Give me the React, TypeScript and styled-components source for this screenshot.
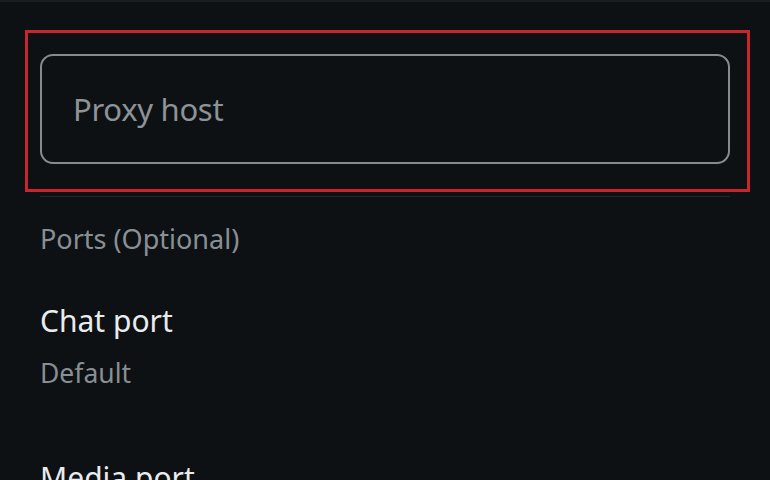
import * as React from "react";
import styled, { createGlobalStyle } from "styled-components";

const GlobalStyle = createGlobalStyle`
  html, body {
    margin: 0;
    padding: 0;
    background: #0d1114;
  }
  body {
    font-family: "Noto Sans", "DejaVu Sans", sans-serif;
    -webkit-font-smoothing: antialiased;
  }
`;

const Screen = styled.div`
  width: 770px;
  height: 480px;
  overflow: hidden;
  background: #0d1114;
  border-top: 2px solid #1a1e22;
  box-sizing: border-box;
`;

const Highlight = styled.div`
  margin: 28px 20px 0 25px;
  border: 3px solid #c9252e;
  padding: 21px 17px 25px 12px;
`;

const Field = styled.div`
  height: 110px;
  border: 2px solid #868b8f;
  border-radius: 13px;
  box-sizing: border-box;
  display: flex;
  align-items: center;
  padding: 0 31px;
`;

const Placeholder = styled.span`
  font-size: 31px;
  color: #8e9397;
  letter-spacing: -0.3px;
`;

const Divider = styled.div`
  height: 1px;
  margin: 4px 40px 0 40px;
  background: #23282c;
`;

const Body = styled.div`
  padding: 0 40px;
`;

const SectionTitle = styled.div`
  margin-top: 26px;
  font-size: 27px;
  line-height: 32px;
  color: #899095;
`;

const Item = styled.div<{ $gap?: number }>`
  margin-top: ${(p) => p.$gap ?? 0}px;
`;

const ItemTitle = styled.div`
  font-size: 30px;
  line-height: 40px;
  color: #e9ebed;
`;

const ItemValue = styled.div`
  font-size: 26.5px;
  line-height: 32px;
  margin-top: 16px;
  color: #898e92;
`;

export default function App() {
  return (
    <>
      <GlobalStyle />
      <Screen>
        <Highlight>
          <Field>
            <Placeholder>Proxy host</Placeholder>
          </Field>
        </Highlight>
        <Divider />
        <Body>
          <SectionTitle>Ports (Optional)</SectionTitle>
          <Item $gap={46}>
            <ItemTitle>Chat port</ItemTitle>
            <ItemValue>Default</ItemValue>
          </Item>
          <Item $gap={69}>
            <ItemTitle>Media port</ItemTitle>
          </Item>
        </Body>
      </Screen>
    </>
  );
}
